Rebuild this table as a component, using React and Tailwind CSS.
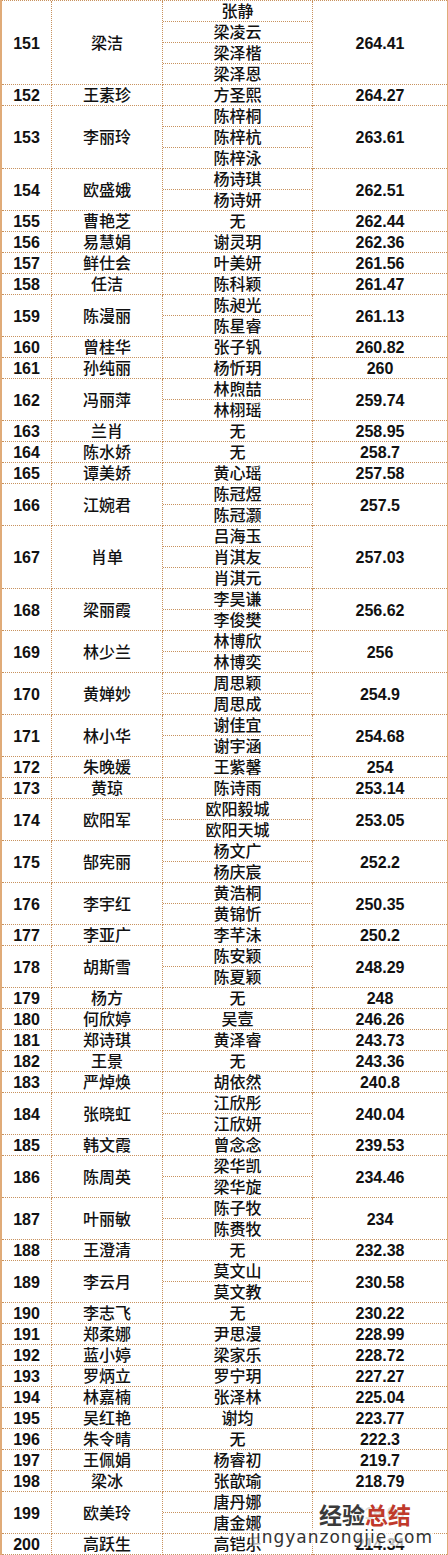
const rows = [
  [151, "梁洁", ["张静", "梁凌云", "梁泽楷", "梁泽恩"], "264.41"],
  [152, "王素珍", ["方圣熙"], "264.27"],
  [153, "李丽玲", ["陈梓桐", "陈梓杭", "陈梓泳"], "263.61"],
  [154, "欧盛娥", ["杨诗琪", "杨诗妍"], "262.51"],
  [155, "曹艳芝", ["无"], "262.44"],
  [156, "易慧娟", ["谢灵玥"], "262.36"],
  [157, "鲜仕会", ["叶美妍"], "261.56"],
  [158, "任洁", ["陈科颖"], "261.47"],
  [159, "陈漫丽", ["陈昶光", "陈星睿"], "261.13"],
  [160, "曾桂华", ["张子钒"], "260.82"],
  [161, "孙纯丽", ["杨忻玥"], "260"],
  [162, "冯丽萍", ["林煦喆", "林栩瑶"], "259.74"],
  [163, "兰肖", ["无"], "258.95"],
  [164, "陈水娇", ["无"], "258.7"],
  [165, "谭美娇", ["黄心瑶"], "257.58"],
  [166, "江婉君", ["陈冠煜", "陈冠灏"], "257.5"],
  [167, "肖单", ["吕海玉", "肖淇友", "肖淇元"], "257.03"],
  [168, "梁丽霞", ["李昊谦", "李俊樊"], "256.62"],
  [169, "林少兰", ["林博欣", "林博奕"], "256"],
  [170, "黄婵妙", ["周思颖", "周思成"], "254.9"],
  [171, "林小华", ["谢佳宜", "谢宇涵"], "254.68"],
  [172, "朱晚媛", ["王紫馨"], "254"],
  [173, "黄琼", ["陈诗雨"], "253.14"],
  [174, "欧阳军", ["欧阳毅城", "欧阳天城"], "253.05"],
  [175, "郜宪丽", ["杨文广", "杨庆宸"], "252.2"],
  [176, "李宇红", ["黄浩桐", "黄锦忻"], "250.35"],
  [177, "李亚广", ["李芊沬"], "250.2"],
  [178, "胡斯雪", ["陈安颖", "陈夏颖"], "248.29"],
  [179, "杨方", ["无"], "248"],
  [180, "何欣婷", ["吴壹"], "246.26"],
  [181, "郑诗琪", ["黄泽睿"], "243.73"],
  [182, "王景", ["无"], "243.36"],
  [183, "严焯焕", ["胡依然"], "240.8"],
  [184, "张晓虹", ["江欣彤", "江欣妍"], "240.04"],
  [185, "韩文霞", ["曾念念"], "239.53"],
  [186, "陈周英", ["梁华凯", "梁华旋"], "234.46"],
  [187, "叶丽敏", ["陈子牧", "陈赉牧"], "234"],
  [188, "王澄清", ["无"], "232.38"],
  [189, "李云月", ["莫文山", "莫文教"], "230.58"],
  [190, "李志飞", ["无"], "230.22"],
  [191, "郑柔娜", ["尹思漫"], "228.99"],
  [192, "蓝小婷", ["梁家乐"], "228.72"],
  [193, "罗炳立", ["罗宁玥"], "227.27"],
  [194, "林嘉楠", ["张泽林"], "225.04"],
  [195, "吴红艳", ["谢均"], "223.77"],
  [196, "朱令晴", ["无"], "222.3"],
  [197, "王佩娟", ["杨睿初"], "219.7"],
  [198, "梁冰", ["张歆瑜"], "218.79"],
  [199, "欧美玲", ["唐丹娜", "唐金娜"], "216.06"],
  [200, "高跃生", ["高铠乐"], "214.34"],
];

const cell = "flex items-center justify-center border-r border-b border-dotted border-[#c8925e] pt-[2px]";

export default function App() {
  return (
    <div
      className="relative w-[448px] bg-white text-[16px] text-[#111] border-l-2 border-r border-solid border-l-[#e0ab78] border-r-[#e0ab78] overflow-hidden h-[1555px]"
      style={{ fontFamily: '"Liberation Sans", "Noto Sans CJK SC", sans-serif' }}
    >
      <div className="border-t border-dotted border-[#c8925e]" />
      {rows.map(([no, name, kids, score]) => (
        <div key={no} className="grid grid-cols-[50px_111px_150px_1fr] leading-none">
          <div className={`${cell} font-bold`}>{no}</div>
          <div className={`${cell} font-medium`}>{name}</div>
          <div className="flex flex-col border-r border-dotted border-[#c8925e]">
            {kids.map((k, j) => (
              <div
                key={j}
                className="h-[21px] flex items-center justify-center border-b border-dotted border-[#c8925e] font-medium pt-[2px]"
              >
                {k}
              </div>
            ))}
          </div>
          <div className="flex items-center justify-center border-b border-dotted border-[#c8925e] font-bold pt-[2px]">
            {score}
          </div>
        </div>
      ))}

      {/* watermark */}
      <div
        className="absolute right-[35px] top-[1503px] text-[23px] leading-none font-bold bg-white/85 px-[1px]"
        style={{ fontFamily: '"Noto Sans CJK SC", sans-serif' }}
      >
        <span className="text-[#3a3a3a]">经验</span>
        <span className="text-[#c0392b]">总结</span>
      </div>
      <div
        className="absolute right-[14px] top-[1529px] text-[17px] tracking-[1px] leading-none text-[#333] bg-white/70"
        style={{ fontFamily: '"DejaVu Sans", sans-serif' }}
      >
        jingyanzongjie.com
      </div>
    </div>
  );
}
